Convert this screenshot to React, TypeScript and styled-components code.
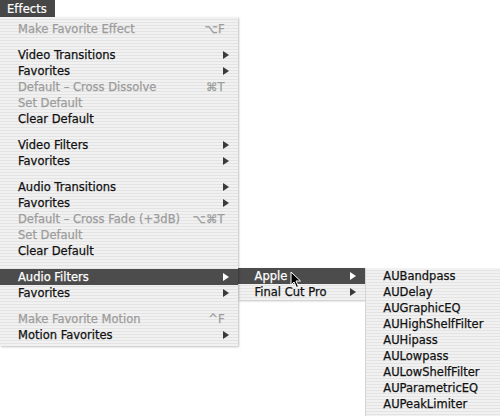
import React from 'react';
import styled, { createGlobalStyle, css } from 'styled-components';

const GlobalStyle = createGlobalStyle`
  html, body {
    margin: 0;
    padding: 0;
    background: #ffffff;
  }
  body {
    font-family: "DejaVu Sans", "Liberation Sans", sans-serif;
    font-size: 11.5px;
    -webkit-font-smoothing: antialiased;
  }
`;

type Item =
  | { kind: 'sep' }
  | { kind: 'item'; label: string; disabled?: boolean; shortcut?: string; sub?: boolean; active?: boolean };

const sep: Item = { kind: 'sep' };
const item = (label: string, opts: Partial<Omit<Extract<Item, { kind: 'item' }>, 'kind' | 'label'>> = {}): Item => ({
  kind: 'item',
  label,
  ...opts,
});

const mainItems: Item[] = [
  item('Make Favorite Effect', { disabled: true, shortcut: '⌥F' }),
  sep,
  item('Video Transitions', { sub: true }),
  item('Favorites', { sub: true }),
  item('Default – Cross Dissolve', { disabled: true, shortcut: '⌘T' }),
  item('Set Default', { disabled: true }),
  item('Clear Default'),
  sep,
  item('Video Filters', { sub: true }),
  item('Favorites', { sub: true }),
  sep,
  item('Audio Transitions', { sub: true }),
  item('Favorites', { sub: true }),
  item('Default – Cross Fade (+3dB)', { disabled: true, shortcut: '⌥⌘T' }),
  item('Set Default', { disabled: true }),
  item('Clear Default'),
  sep,
  item('Audio Filters', { sub: true, active: true }),
  item('Favorites', { sub: true }),
  sep,
  item('Make Favorite Motion', { disabled: true, shortcut: '^F' }),
  item('Motion Favorites', { sub: true }),
];

const audioItems: Item[] = [item('Apple', { sub: true, active: true }), item('Final Cut Pro', { sub: true })];

const appleItems: Item[] = [
  'AUBandpass',
  'AUDelay',
  'AUGraphicEQ',
  'AUHighShelfFilter',
  'AUHipass',
  'AULowpass',
  'AULowShelfFilter',
  'AUParametricEQ',
  'AUPeakLimiter',
].map((l) => item(l));

const Arrow = ({ light }: { light?: boolean }) => (
  <svg width="6" height="8" viewBox="0 0 6 8">
    <path d="M0 0 L6 4 L0 8 Z" fill={light ? '#ffffff' : '#3a3a3a'} />
  </svg>
);

const Cursor = () => (
  <svg width="12" height="18" viewBox="0 0 12 18">
    <path d="M1 1 L1 14 L4 11 L6.5 16.5 L8.5 15.5 L6 10 L10.5 10 Z" fill="#000" stroke="#fff" strokeWidth="1" />
  </svg>
);

const MenuList = ({ items, cursorOn }: { items: Item[]; cursorOn?: string }) => (
  <>
    {items.map((it, i) =>
      it.kind === 'sep' ? (
        <Separator key={i} />
      ) : (
        <Row key={i} $active={it.active} $disabled={it.disabled}>
          <Label>
            {it.label}
            {cursorOn === it.label && (
              <CursorSpot>
                <Cursor />
              </CursorSpot>
            )}
          </Label>
          {it.shortcut && <Shortcut>{it.shortcut}</Shortcut>}
          {it.sub && (
            <ArrowCell>
              <Arrow light={it.active} />
            </ArrowCell>
          )}
        </Row>
      )
    )}
  </>
);

export default function App() {
  return (
    <Page>
      <GlobalStyle />
      <MenuBar>
        <MenuTitle>Effects</MenuTitle>
      </MenuBar>
      <Cascade>
        <MainMenu>
          <MenuList items={mainItems} />
        </MainMenu>
        <SubMenu $width={128}>
          <MenuList items={audioItems} cursorOn="Apple" />
        </SubMenu>
        <SubMenu $width={134} $last>
          <MenuList items={appleItems} />
        </SubMenu>
      </Cascade>
    </Page>
  );
}

const Page = styled.div`
  width: 500px;
  height: 416px;
  overflow: hidden;
  background: #ffffff;
`;

const MenuBar = styled.div`
  display: flex;
  height: 17px;
`;

const MenuTitle = styled.div`
  display: flex;
  align-items: center;
  padding: 0 8px 0 7px;
  background: #474747;
  color: #ffffff;
  font-size: 11.5px;
  letter-spacing: 0.1px;
  -webkit-text-stroke: 0.2px #ffffff;
`;

const stripes = css`
  background: repeating-linear-gradient(to bottom, #f1f1f1 0px, #f1f1f1 2px, #e3e3e3 2px, #e3e3e3 3px);
`;

const Cascade = styled.div`
  display: flex;
  align-items: flex-start;
`;

const MainMenu = styled.div`
  width: 238px;
  padding: 4px 0 3px;
  ${stripes};
  box-shadow: 1px 1px 2px rgba(0, 0, 0, 0.25);
  position: relative;
  z-index: 1;
`;

const SubMenu = styled.div<{ $width: number; $last?: boolean }>`
  width: ${({ $width }) => $width}px;
  margin-top: 251px;
  ${stripes};
  box-shadow: ${({ $last }) => ($last ? 'none' : '1px 1px 2px rgba(0, 0, 0, 0.25)')};
  border-left: ${({ $last }) => ($last ? '1px solid #d4d4d4' : 'none')};
  ${({ $last }) => ($last && 'padding-bottom: 8px;') || ''}
`;

const Row = styled.div<{ $active?: boolean; $disabled?: boolean }>`
  display: flex;
  align-items: center;
  height: 16px;
  padding: 0 9px 0 18px;
  color: ${({ $disabled }) => ($disabled ? '#9c9c9c' : '#111111')};
  -webkit-text-stroke: 0.25px ${({ $disabled }) => ($disabled ? '#9c9c9c' : '#111111')};
  white-space: nowrap;
  ${({ $active }) =>
    $active &&
    css`
      background: #4c4c4c;
      color: #ffffff;
      -webkit-text-stroke: 0.25px #ffffff;
    `}

  ${SubMenu} & {
    padding-left: 17px;
  }
`;

const Label = styled.span`
  flex: 1;
  position: relative;
`;

const CursorSpot = styled.span`
  position: absolute;
  left: 35px;
  top: 2px;
`;

const Shortcut = styled.span`
  color: #9c9c9c;
  font-size: 11.5px;
  margin-right: 4px;
`;

const ArrowCell = styled.span`
  display: flex;
  align-items: center;
`;

const Separator = styled.div`
  height: 10px;
`;
